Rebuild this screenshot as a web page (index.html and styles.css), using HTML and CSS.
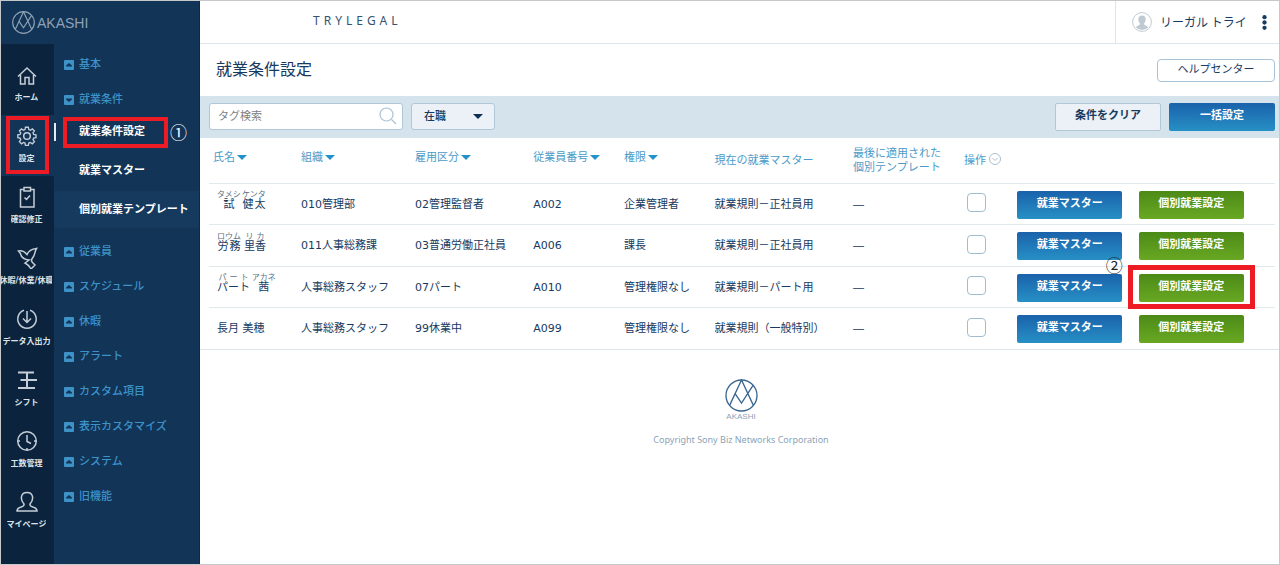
FILE: index.html
```html
<!DOCTYPE html>
<html lang="ja">
<head>
<meta charset="utf-8">
<title>就業条件設定 | AKASHI</title>
<link rel="stylesheet" href="styles.css">
</head>
<body>
<svg class="defs" aria-hidden="true">
  <symbol id="mark" viewBox="0 0 100 100"><circle cx="50" cy="50" r="47"/><path d="M14 80 50 3l36 77M31 45l19 28 35-54"/></symbol>
  <symbol id="up" viewBox="0 0 10 10"><rect class="tile" width="10" height="10" rx="1"/><path class="cut" d="M2 6.500V5.500L5 3l3 2.500v1z"/></symbol>
  <symbol id="down" viewBox="0 0 10 10"><rect class="tile" width="10" height="10" rx="1"/><path class="cut" d="M2 3.500v1L5 7l3-2.500v-1z"/></symbol>
</svg>
<div class="app">
  <aside class="sidebar">
    <a class="brand" href="#"><svg class="brand-mark"><use href="#mark"/></svg>AKASHI</a>
    <div class="navs">
      <nav class="rail" aria-label="メイン">
        <a class="rail-item" href="#"><svg class="icon" viewBox="0 0 22 22"><path d="M2 12.500 11 4l9 8.500M4.500 11v9H9v-6.500h4V20h4.500v-9"/></svg><span>ホーム</span></a>
        <a class="rail-item active" href="#"><svg class="icon" viewBox="0 0 22 22"><circle cx="11" cy="11" r="3.300"/><path d="M9.400 1.800h3.200l.5 2.600 1.700.7 2.200-1.500 2.300 2.300-1.500 2.200.7 1.700 2.600.5v3.200l-2.600.5-.7 1.700 1.500 2.200-2.300 2.300-2.200-1.500-1.700.7-.5 2.600H9.400l-.5-2.600-1.700-.7L5 20.200l-2.300-2.300 1.500-2.200-.7-1.700L.9 13.500v-3.200l2.600-.5.7-1.700-1.500-2.200L5 3.600l2.200 1.500 1.700-.7z" transform="translate(1 .6) scale(.9)"/></svg><span>設定</span><i class="mark-box"></i></a>
        <a class="rail-item" href="#"><svg class="icon" viewBox="0 0 22 22"><path d="M8 3.500H4.500V21h13.500V3.500h-3.500M8 1.500h6.500v3.500H8zM8.500 11.500l2 2 3.500-4"/></svg><span>確認修正</span></a>
        <a class="rail-item" href="#"><svg class="icon" viewBox="0 0 22 22"><path d="M2.500 4c3-.5 6 .5 8.500 3.500C12.500 4 15 2 20.500 1.500c-2 2.500-1 6-4 9.500-1.500 2-1.500 3 0 4.500l2.500 2.500-4 4c-1.500-3-3-4.500-6-6L13 13C8 12.500 5 9.500 4.500 6.500z"/></svg><span>休暇/休業/休職</span></a>
        <a class="rail-item" href="#"><svg class="icon" viewBox="0 0 22 22"><path d="M8 2.300a9.200 9.200 0 1 0 6 0M11 3v11M7 10.500l4 4 4-4"/></svg><span>データ入出力</span></a>
        <a class="rail-item" href="#"><svg class="icon" viewBox="0 0 22 22"><path class="thick" d="M2 3.500h16M4.500 11H21M2 19h17M11 3.500V19"/></svg><span>シフト</span></a>
        <a class="rail-item" href="#"><svg class="icon" viewBox="0 0 22 22"><circle cx="11" cy="11" r="9.300"/><path d="M11 5v6.500l4 2M2 11h2M18 11h2M11 18v2"/></svg><span>工数管理</span></a>
        <a class="rail-item" href="#"><svg class="icon" viewBox="0 0 22 22"><path d="M8 13C3.500 8 5 1.500 11 1.500S18.500 8 14 13c-.5 2 1 2.500 3.500 3.300 2.500.7 3.500 1.700 3.500 3.700H1c0-2 1-3 3.500-3.700C7 15.500 8.500 15 8 13z"/></svg><span>マイページ</span></a>
      </nav>
      <nav class="menu" aria-label="設定">
        <a class="cat" href="#"><svg class="tick"><use href="#up"/></svg>基本</a>
        <a class="cat" href="#"><svg class="tick"><use href="#down"/></svg>就業条件</a>
        <div class="subs">
          <a class="sub current" href="#">就業条件設定<i class="mark-box"></i><b class="num">①</b></a>
          <a class="sub" href="#">就業マスター</a>
          <a class="sub hover" href="#">個別就業テンプレート</a>
        </div>
        <a class="cat" href="#"><svg class="tick"><use href="#up"/></svg>従業員</a>
        <a class="cat" href="#"><svg class="tick"><use href="#up"/></svg>スケジュール</a>
        <a class="cat" href="#"><svg class="tick"><use href="#up"/></svg>休暇</a>
        <a class="cat" href="#"><svg class="tick"><use href="#up"/></svg>アラート</a>
        <a class="cat" href="#"><svg class="tick"><use href="#up"/></svg>カスタム項目</a>
        <a class="cat" href="#"><svg class="tick"><use href="#up"/></svg>表示カスタマイズ</a>
        <a class="cat" href="#"><svg class="tick"><use href="#up"/></svg>システム</a>
        <a class="cat" href="#"><svg class="tick"><use href="#up"/></svg>旧機能</a>
      </nav>
    </div>
  </aside>
  <div class="main">
    <header class="topbar">
      <span class="company">TRYLEGAL</span>
      <div class="user">
        <svg class="avatar" viewBox="0 0 20 20"><circle class="ring" cx="10" cy="10" r="9.400"/><path d="M10 3.500c-3 0-4.200 2.500-3.500 5.200.4 1.600 1.200 2.300 1.500 3.300-.3 1.500-3 1.500-4.200 3.200a8.200 8.200 0 0 0 12.400 0c-1.200-1.700-3.900-1.700-4.200-3.200.3-1 1.100-1.700 1.500-3.300.7-2.700-.5-5.200-3.500-5.200z"/></svg>
        <span class="user-name">リーガル トライ</span>
        <button class="more" type="button" aria-label="メニュー"><svg viewBox="0 0 4 14"><circle cx="2" cy="2" r="2"/><circle cx="2" cy="7" r="2"/><circle cx="2" cy="12" r="2"/></svg></button>
      </div>
    </header>
    <div class="heading">
      <h1>就業条件設定</h1>
      <button class="help" type="button">ヘルプセンター</button>
    </div>
    <form class="filters">
      <div class="search">
        <input type="text" placeholder="タグ検索" aria-label="タグ検索">
        <svg viewBox="0 0 18 18"><circle cx="7.500" cy="7.500" r="6.500"/><path d="m12.500 12.500 4.500 4.500"/></svg>
      </div>
      <div class="pick">
        <select aria-label="在職状況"><option>在職</option></select>
        <i class="caret"></i>
      </div>
      <button class="btn clear" type="button">条件をクリア</button>
      <button class="btn blue" type="button">一括設定</button>
    </form>
    <div class="list">
      <table>
        <colgroup><col class="c-name"><col class="c-org"><col class="c-type"><col class="c-no"><col class="c-auth"><col class="c-master"><col class="c-tmpl"><col class="c-op"><col class="c-act"><col></colgroup>
        <thead>
          <tr>
            <th>氏名<i class="caret"></i></th><th>組織<i class="caret"></i></th><th>雇用区分<i class="caret"></i></th><th>従業員番号<i class="caret"></i></th><th>権限<i class="caret"></i></th>
            <th class="low">現在の就業マスター</th><th class="low">最後に適用された<br>個別テンプレート</th>
            <th class="low">操作<svg class="toggle" viewBox="0 0 12 12"><circle cx="6" cy="6" r="5.500"/><path d="m3.500 5 2.500 2.500L8.500 5"/></svg></th><th></th><th></th>
          </tr>
        </thead>
        <tbody>
          <tr>
            <td class="name kana"><ruby>試<rt>タメシ</rt></ruby> <ruby>健太<rt>ケンタ</rt></ruby></td><td>010管理部</td><td>02管理監督者</td><td>A002</td><td>企業管理者</td><td>就業規則－正社員用</td><td>―</td>
            <td><input type="checkbox" aria-label="試 健太"></td><td><button class="btn blue" type="button">就業マスター</button></td><td><button class="btn green" type="button">個別就業設定</button></td>
          </tr>
          <tr>
            <td class="name kana"><ruby>労務<rt>ロウム</rt></ruby> <ruby>里香<rt>リカ</rt></ruby></td><td>011人事総務課</td><td>03普通労働正社員</td><td>A006</td><td>課長</td><td>就業規則－正社員用</td><td>―</td>
            <td><input type="checkbox" aria-label="労務 里香"></td><td><button class="btn blue" type="button">就業マスター</button></td><td><button class="btn green" type="button">個別就業設定</button></td>
          </tr>
          <tr>
            <td class="name kana"><ruby>パート<rt>パート</rt></ruby> <ruby>茜<rt>アカネ</rt></ruby></td><td>人事総務スタッフ</td><td>07パート</td><td>A010</td><td>管理権限なし</td><td>就業規則－パート用</td><td>―</td>
            <td><input type="checkbox" aria-label="パート 茜"></td><td><button class="btn blue" type="button">就業マスター</button></td><td><div class="callout"><button class="btn green" type="button">個別就業設定</button><i class="mark-box"></i><b class="num">②</b></div></td>
          </tr>
          <tr>
            <td class="name">長月 美穂</td><td>人事総務スタッフ</td><td>99休業中</td><td>A099</td><td>管理権限なし</td><td>就業規則（一般特別）</td><td>―</td>
            <td><input type="checkbox" aria-label="長月 美穂"></td><td><button class="btn blue" type="button">就業マスター</button></td><td><button class="btn green" type="button">個別就業設定</button></td>
          </tr>
        </tbody>
      </table>
    </div>
    <footer>
      <svg class="foot-mark"><use href="#mark"/></svg>
      <span class="foot-brand">AKASHI</span>
      <small>Copyright Sony Biz Networks Corporation</small>
    </footer>
  </div>
</div>
</body>
</html>
```
FILE: styles.css
```css
* { box-sizing: border-box; }

body {
  margin: 0;
  font: 11px/14px "DejaVu Sans", "Noto Sans CJK JP", sans-serif;
  color: #173a60;
  background: #fff;
}

a { color: inherit; text-decoration: none; }
svg { fill: none; stroke: currentColor; flex: none; }
button, input, select { font: inherit; color: inherit; margin: 0; }
.defs { position: absolute; width: 0; height: 0; }

.app {
  display: flex;
  min-height: 100vh;
  border: 1px solid #c6c8ca;
}

/* sidebar */
.sidebar {
  display: flex;
  flex-direction: column;
  flex: 0 0 199px;
  background: #123457;
  border-right: 1px solid #0e2a4b;
}

.brand {
  display: flex;
  align-items: center;
  gap: 2px;
  height: 43px;
  padding-left: 11px;
  font: 14px/20px "Liberation Sans", sans-serif;
  color: #8fa2b5;
}
.brand-mark { width: 23px; height: 23px; stroke-width: 5; }

.navs { display: flex; flex: 1; }

.rail {
  flex: 0 0 53px;
  min-width: 0;
  padding-top: 10px;
  background: #0c233d;
  color: #dde3e9;
}
.rail-item {
  position: relative;
  display: flex;
  flex-direction: column;
  align-items: center;
  gap: 6px;
  height: 61px;
  padding: 10px 2px 0 0;
  font-size: 8px;
  line-height: 12px;
  font-weight: 700;
  white-space: nowrap;
}
.rail-item span { max-width: 51px; overflow: hidden; display: flex; justify-content: center; }
.rail-item.active { background: #123457; }
.icon { width: 22px; height: 22px; stroke-width: 1.5; color: #c5ced7; }
.thick { stroke-width: 2; }

.menu { flex: 1; padding-top: 3px; color: #3d92c8; }
.cat {
  display: flex;
  align-items: center;
  gap: 5px;
  height: 35px;
  padding-left: 10px;
  font-weight: 500;
}
.tick { width: 10px; height: 10px; }
.tile { fill: #3d92c8; stroke: none; }
.cut { fill: #123457; stroke: none; }

.subs {
  display: flex;
  flex-direction: column;
  gap: 2px;
  margin: -4px 0 6px;
  color: #fff;
  font-weight: 700;
}
.sub {
  position: relative;
  display: flex;
  align-items: center;
  height: 37px;
  padding-left: 25px;
  white-space: nowrap;
}
.sub.hover { background: #153a5e; }
.current::before {
  content: "";
  position: absolute;
  left: 0;
  width: 2px;
  height: 18px;
  background: #e6ebf0;
}

/* numbered highlights lying over the controls */
.mark-box { position: absolute; border: 4px solid #ed1c24; pointer-events: none; }
.rail-item .mark-box { inset: 1px 5px 2px; }
.sub .mark-box { inset: 4px 31px 2px 9px; }
.callout { position: relative; display: inline-block; vertical-align: middle; }
.callout .mark-box { inset: -9px -11px -7px; border-width: 5px; }
.num { position: absolute; font: 400 17px/18px "Noto Sans CJK JP", sans-serif; }
.sub .num { left: 116px; }
.callout .num { left: -33px; top: -18px; color: #222; }

/* top area */
.main { flex: 1; min-width: 0; }
.topbar {
  display: flex;
  align-items: stretch;
  justify-content: space-between;
  height: 43px;
  border-bottom: 1px solid #dfe6eb;
}
.company {
  padding: 13px 0 0 113px;
  font-family: "Noto Sans", sans-serif;
  font-size: 12px;
  letter-spacing: 4px;
  color: #35526f;
}
.user {
  display: flex;
  align-items: center;
  flex: 0 0 164px;
  padding: 0 12px 0 16px;
  border-left: 1px solid #dfe6eb;
}
.avatar { width: 20px; height: 20px; fill: #c0cad2; stroke: none; }
.ring { fill: #fff; stroke: #c0cad2; }
.user-name { margin-left: 8px; font-family: "Noto Sans CJK JP", sans-serif; font-size: 12px; white-space: nowrap; }
.more { margin-left: auto; padding: 0; border: 0; background: none; }
.more svg { display: block; width: 5px; height: 15px; fill: #173a60; stroke: none; }

.heading {
  display: flex;
  align-items: center;
  justify-content: space-between;
  height: 52px;
  padding: 0 4px 0 16px;
}
h1 { margin: 0; font-size: 16px; line-height: 24px; font-weight: 400; }
.help {
  width: 118px;
  height: 23px;
  padding: 0;
  border: 1px solid #a9c3d6;
  border-radius: 4px;
  background: #fff;
}

.filters {
  display: flex;
  align-items: flex-start;
  gap: 8px;
  height: 42px;
  padding: 7px 4px 0 9px;
  background: #d5e3ec;
}
.search, .pick { position: relative; height: 27px; }
.search { width: 194px; }
.search input, .pick select {
  width: 100%;
  height: 100%;
  border: 1px solid #afc7d8;
  border-radius: 3px;
  background: #fff;
}
.search input { padding: 0 30px 0 8px; }
.search input::placeholder { color: #7b7f84; }
.search svg { position: absolute; right: 6px; top: 4px; width: 18px; height: 18px; color: #a9c3d6; stroke-width: 1.2; }
.pick { width: 84px; margin-right: auto; }
.pick select { appearance: none; padding: 0 12px; background: #ebf1f6; font-weight: 500; }
.pick .caret { position: absolute; right: 12px; top: 11px; color: #0e2f55; }

.caret {
  display: inline-block;
  border: 5px solid transparent;
  border-top-color: currentColor;
  border-bottom: 0;
}

.btn {
  display: block;
  width: 105px;
  height: 28px;
  padding: 0 0 2px;
  border: 0;
  border-radius: 2px;
  color: #fff;
  font-weight: 700;
}
.blue { background: linear-gradient(#1a62ab, #2790c5); }
.green { background: linear-gradient(#4c8a17, #69a823); }
.clear { border: 1px solid #b3c8d7; background: #ebf1f6; color: #173a60; }
.filters .btn { width: 106px; }

/* list */
.list { padding: 0 4px 0 9px; border-bottom: 1px solid #dfe6eb; }
table { width: 100%; table-layout: fixed; border-collapse: separate; border-spacing: 0; }
.c-name { width: 8.25%; }
.c-org { width: 10.7%; }
.c-type { width: 11.1%; }
.c-no { width: 8.5%; }
.c-auth { width: 8.5%; }
.c-master { width: 13%; }
.c-tmpl { width: 10.4%; }
.c-op { width: 5%; }
.c-act { width: 11.4%; }
th, td { padding: 0 0 0 4px; text-align: left; white-space: nowrap; border-bottom: 1px solid #e2e9ec; }
th { height: 46px; padding-bottom: 6px; font-weight: 400; color: #4b9bc8; }
th.low { padding-bottom: 0; }
th .caret { margin-left: 2px; color: #2391cc; vertical-align: 1px; }
.toggle { width: 12px; height: 12px; margin-left: 3px; vertical-align: -1px; color: #a9bfce; }
td { height: 41px; padding-top: 1px; }
tr:nth-child(even) td { height: 42px; }
tr:last-child td { height: 41px; border-bottom: 0; }
td.name { padding-left: 8px; }
td.kana { padding-bottom: 6px; }
rt { font-size: 8px; line-height: 9px; color: #5d7185; }
td input {
  appearance: none;
  display: block;
  width: 19px;
  height: 19px;
  margin: 0 0 4px 3px;
  border: 1px solid #9fbdd0;
  border-radius: 4px;
  background: #fff;
}

footer {
  display: flex;
  flex-direction: column;
  align-items: center;
  padding: 29px 0 0 3px;
  color: #8ba3b8;
}
.foot-mark { width: 33px; height: 33px; stroke-width: 4; color: #3a6690; }
.foot-brand { font: 8px/10px "Liberation Sans", sans-serif; }
small { margin-top: 11px; font: 9px/14px "Noto Sans", sans-serif; }
```
